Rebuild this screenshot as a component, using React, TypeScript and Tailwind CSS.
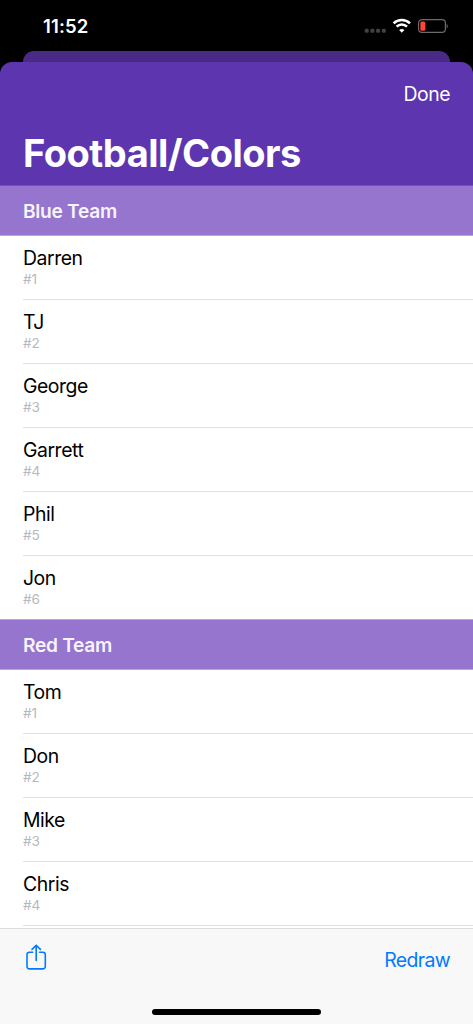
const teams = [
  { name: 'Blue Team', players: ['Darren', 'TJ', 'George', 'Garrett', 'Phil', 'Jon'] },
  { name: 'Red Team', players: ['Tom', 'Don', 'Mike', 'Chris'] },
];

function StatusBar() {
  return (
    <div className="h-[51px] shrink-0 flex justify-between pl-[43px] pr-[25px]">
      <span className="mt-[14px] text-[18.5px] leading-6 font-semibold text-white tracking-[0.15px]">11:52</span>
      <svg className="mt-[17px]" width="84" height="18" viewBox="0 0 84 18" fill="none">
        {/* No signal */}
        <g fill="#414143">
          <rect x="0.7" y="11.8" width="4" height="4" rx="1.3" />
          <rect x="6.4" y="11.8" width="4" height="4" rx="1.3" />
          <rect x="12.1" y="11.8" width="4" height="4" rx="1.3" />
          <rect x="17.8" y="11.8" width="4" height="4" rx="1.3" />
        </g>
        {/* Wifi */}
        <g stroke="#fff" strokeWidth="2.5">
          <path d="M29.6 6.3a11.6 11.6 0 0 1 16.4 0" />
          <path d="M32.6 9.6a7.3 7.3 0 0 1 10.4 0" />
        </g>
        <path d="M37.8 15.8l-2.6-2.7a3.8 3.8 0 0 1 5.2 0z" fill="#fff" />
        {/* Low battery */}
        <rect x="54.6" y="2.6" width="26.8" height="12.8" rx="3.4" stroke="#6b6b6e" strokeWidth="1.2" />
        <path d="M82.6 7v4.4c1.5-.5 1.5-3.9 0-4.4z" fill="#6b6b6e" />
        <rect x="56.4" y="4.4" width="5" height="9.4" rx="1.5" fill="#ff453a" />
      </svg>
    </div>
  );
}

function PlayerRow({ name, number, last }: { name: string; number: number; last: boolean }) {
  return (
    <li className={`ml-[23px] pt-[9px] ${last ? 'h-[63px]' : 'h-16 border-b border-[#e1e1e3]'}`}>
      <p className="text-[19.4px] leading-[26px] tracking-[-0.45px] text-black">{name}</p>
      <p className="-mt-px text-[13.6px] leading-[18px] text-[#b8b8bb]">#{number}</p>
    </li>
  );
}

export default function App() {
  return (
    <div className="w-full h-screen overflow-hidden flex flex-col bg-black font-['Inter',sans-serif]">
      <StatusBar />
      <div className="h-[11px] shrink-0 mx-[23px] rounded-t-[11px] bg-[#492b87]" />

      <div className="flex-1 min-h-0 flex flex-col">
        <header className="h-[123px] shrink-0 px-[23px] rounded-t-[12px] bg-[#5d35af] text-white">
          <div className="flex justify-end pt-[19px]">
            <button className="text-[19.4px] leading-[26px] tracking-[-0.45px]">Done</button>
          </div>
          <h1 className="mt-[22px] text-[38px] leading-[48px] font-bold tracking-[-0.5px]">Football/Colors</h1>
        </header>

        <main className="flex-1 min-h-0 overflow-hidden bg-white">
          {teams.map((team, t) => (
            <section key={team.name}>
              <h2 className={`h-[51px] border-y border-b-[#bba6e0] bg-[#9575cd] pl-[23px] pt-[12px] text-[19.2px] leading-[26px] font-semibold tracking-[-0.3px] text-[#f7f3fc] ${t === 0 ? 'border-t-[#7450b5]' : 'border-t-[#bba6e0]'}`}>
                {team.name}
              </h2>
              <ul>
                {team.players.map((p, i) => (
                  <PlayerRow key={p} name={p} number={i + 1} last={t === 0 && i === team.players.length - 1} />
                ))}
              </ul>
            </section>
          ))}
        </main>

        <footer className="h-24 shrink-0 flex flex-col justify-between border-t border-[#dcdcdd] bg-[#f8f8f8]">
          <div className="flex justify-between pl-[25px] pr-[23px] text-[#007aff]">
            <svg className="mt-[15px]" width="22" height="27" viewBox="0 0 22 27" fill="none" stroke="currentColor" strokeWidth="1.6" strokeLinecap="round" strokeLinejoin="round">
              <path d="M7.7 8.2H4.4a2.4 2.4 0 0 0-2.4 2.4v11.9a2.4 2.4 0 0 0 2.4 2.4h13.5a2.4 2.4 0 0 0 2.4-2.4V10.6a2.4 2.4 0 0 0-2.4-2.4h-3.3" />
              <path d="M11.2 16.4V1.4M7 5.4l4.2-4.2 4.2 4.2" />
            </svg>
            <button className="mt-[18px] text-[19.4px] leading-[26px] tracking-[-0.6px]">Redraw</button>
          </div>
          <div className="mx-auto mb-[9px] w-[169px] h-[6px] rounded-full bg-black" />
        </footer>
      </div>
    </div>
  );
}
